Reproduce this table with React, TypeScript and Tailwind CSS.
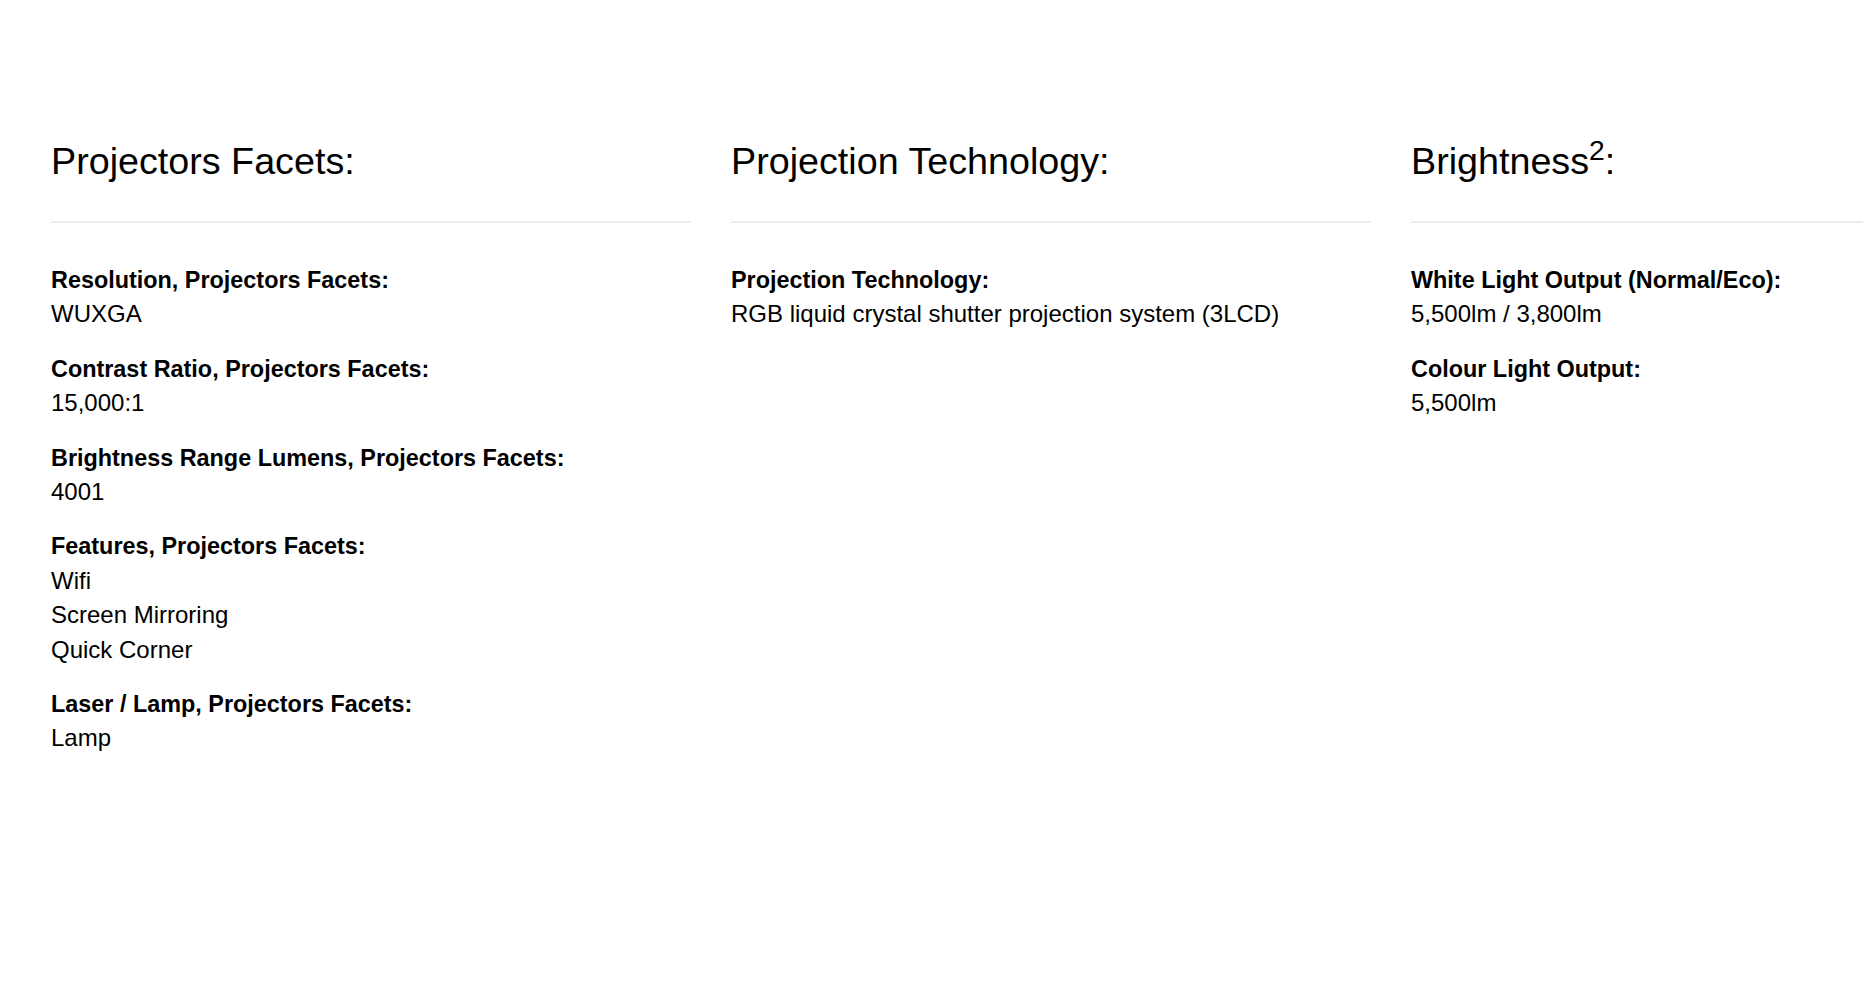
type Spec = {
	label: string;
	values: string[];
};

type Facet = {
	title: React.ReactNode;
	specs: Spec[];
};

const facets: Facet[] = [
	{
		title: "Projectors Facets:",
		specs: [
			{ label: "Resolution, Projectors Facets:", values: ["WUXGA"] },
			{ label: "Contrast Ratio, Projectors Facets:", values: ["15,000:1"] },
			{
				label: "Brightness Range Lumens, Projectors Facets:",
				values: ["4001"],
			},
			{
				label: "Features, Projectors Facets:",
				values: ["Wifi", "Screen Mirroring", "Quick Corner"],
			},
			{ label: "Laser / Lamp, Projectors Facets:", values: ["Lamp"] },
		],
	},
	{
		title: "Projection Technology:",
		specs: [
			{
				label: "Projection Technology:",
				values: ["RGB liquid crystal shutter projection system (3LCD)"],
			},
		],
	},
	{
		title: (
			<>
				Brightness<sup>2</sup>:
			</>
		),
		specs: [
			{
				label: "White Light Output (Normal/Eco):",
				values: ["5,500lm / 3,800lm"],
			},
			{ label: "Colour Light Output:", values: ["5,500lm"] },
		],
	},
];

const SpecItem = ({ spec }: { spec: Spec }) => {
	return (
		<div className="flex flex-col">
			<span className="font-bold text-[23.4px]">{spec.label}</span>
			{spec.values.map((value) => (
				<span key={value}>{value}</span>
			))}
		</div>
	);
};

const FacetColumn = ({ facet }: { facet: Facet }) => {
	return (
		<div className="w-[640px] shrink-0">
			<h2 className="text-[37.7px] leading-[43px] font-normal pb-[38px] border-b-2 border-[#ececec]">
				{facet.title}
			</h2>
			<div className="mt-[40px] flex flex-col gap-[20px] text-[24px] leading-[34.4px]">
				{facet.specs.map((spec) => (
					<SpecItem key={spec.label} spec={spec} />
				))}
			</div>
		</div>
	);
};

export default function App() {
	return (
		<div
			className="w-full h-[990px] overflow-hidden bg-white text-black"
			style={{ fontFamily: '"Liberation Sans", Arial, sans-serif' }}
		>
			<div className="flex gap-[40px] pl-[51px] pt-[140px]">
				{facets.map((facet, i) => (
					<FacetColumn key={i} facet={facet} />
				))}
			</div>
		</div>
	);
}
